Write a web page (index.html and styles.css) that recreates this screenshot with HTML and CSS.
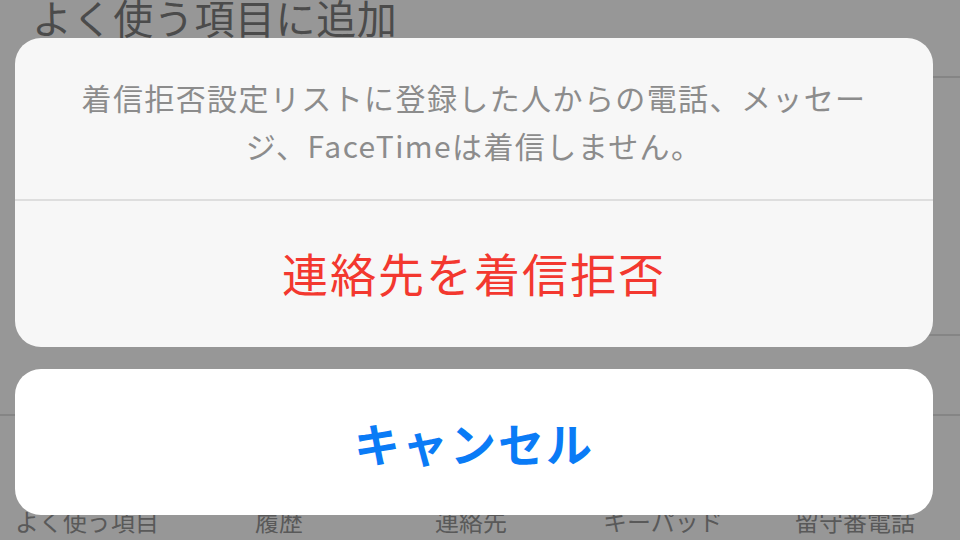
FILE: index.html
```html
<!DOCTYPE html>
<html lang="ja">
<head>
<meta charset="utf-8">
<link rel="stylesheet" href="styles.css">
</head>
<body>
<div class="screen">
  <div class="page">
    <div class="title">よく使う項目に追加</div>
    <div class="sep sep-a"></div>
    <div class="sep sep-b"></div>
    <div class="sep sep-c"></div>
    <div class="tabbar">
      <div class="tab">よく使う項目</div>
      <div class="tab">履歴</div>
      <div class="tab">連絡先</div>
      <div class="tab">キーパッド</div>
      <div class="tab">留守番電話</div>
    </div>
  </div>
  <div class="sheet">
    <div class="group">
      <div class="message">着信拒否設定リストに登録した人からの電話、メッセー<br>ジ、FaceTimeは着信しません。</div>
      <div class="action danger">連絡先を着信拒否</div>
    </div>
    <div class="cancel">キャンセル</div>
  </div>
</div>
</body>
</html>
```

FILE: styles.css
```css
html, body {
  margin: 0;
  padding: 0;
}
body {
  font-family: "Noto Sans CJK JP", "Noto Sans", sans-serif;
  background: #979797;
}
.screen {
  position: relative;
  width: 960px;
  height: 540px;
  overflow: hidden;
  background: #979797;
}
.page {
  display: flex;
  flex-direction: column;
  height: 540px;
}
.title {
  margin: -3px 0 0 32px;
  font-size: 40px;
  line-height: 40px;
  color: #4b4b4b;
  letter-spacing: 0.6px;
}
.sep {
  height: 2px;
  background: #858585;
}
.sep-a {
  margin: 39px 0 0 100px;
}
.sep-b {
  margin: 256px 0 0 100px;
}
.sep-c {
  margin: 78px 0 0 0;
}
.tabbar {
  margin: 91px 0 0 -9px;
  width: 960px;
  display: grid;
  grid-template-columns: repeat(5, 1fr);
}
.tab {
  text-align: center;
  font-size: 24px;
  line-height: 28px;
  color: #595959;
}
.sheet {
  position: absolute;
  left: 15px;
  top: 38px;
  width: 918px;
  display: flex;
  flex-direction: column;
  gap: 22px;
}
.group {
  background: #f7f7f7;
  border-radius: 26px;
  overflow: hidden;
}
.message {
  padding: 35px 20px 30px;
  text-align: center;
  font-size: 30px;
  line-height: 48px;
  letter-spacing: 1.4px;
  color: #8c8c8c;
  border-bottom: 2px solid #dedede;
}
.action {
  height: 146px;
  padding-bottom: 4px;
  box-sizing: border-box;
  display: flex;
  align-items: center;
  justify-content: center;
  font-size: 46px;
  letter-spacing: 2px;
}
.danger {
  color: #f3382f;
}
.cancel {
  height: 146px;
  background: #ffffff;
  border-radius: 26px;
  display: flex;
  align-items: center;
  justify-content: center;
  font-size: 46px;
  font-weight: 700;
  letter-spacing: 2px;
  color: #0a7bf6;
}
```
